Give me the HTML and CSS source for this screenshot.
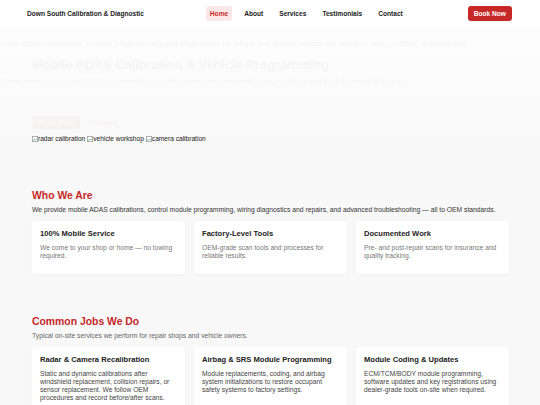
FILE: index.html
```html
<!DOCTYPE html>
<html lang="en">
<head>
  <meta charset="UTF-8">
  <meta name="viewport" content="width=device-width, initial-scale=1.0">
  <title>Down South Calibration &amp; Diagnostic</title>
  <link rel="stylesheet" href="styles.css">
</head>
<body>
  <!-- Barra di navigazione -->
  <header class="nav">
    <div class="brand">Down South Calibration &amp; Diagnostic</div>
    <nav class="links">
      <a class="active" href="#">Home</a>
      <a href="#">About</a>
      <a href="#">Services</a>
      <a href="#">Testimonials</a>
      <a href="#">Contact</a>
    </nav>
    <a class="book" href="#">Book Now</a>
  </header>

  <section class="hero">
    <p class="hero-back">On-site ADAS calibration, module programming and diagnostics for shops and drivers across the South — fast, certified, documented.</p>
    <div class="hero-inner">
      <h1>Mobile ADAS Calibration &amp; Vehicle Programming</h1>
      <p class="hero-sub">Dealer-level scan tools, OEM procedures and certified technicians that come straight to your bay, your driveway or your lot.</p>
      <div class="hero-actions">
        <span class="btn-red">Book Now</span>
        <span class="btn-ghost">Contact</span>
      </div>
    </div>
    <div class="hero-images">
      <span class="img"><svg viewBox="0 0 8 8"><rect x="0.5" y="0.5" width="7" height="7" fill="#fff" stroke="#999"/><path d="M1.5 6.5 L3.5 4 L5 5.5 L6.5 3.5" stroke="#6a9" fill="none"/></svg>radar calibration</span>
      <span class="img"><svg viewBox="0 0 8 8"><rect x="0.5" y="0.5" width="7" height="7" fill="#fff" stroke="#999"/><path d="M1.5 6.5 L3.5 4 L5 5.5 L6.5 3.5" stroke="#6a9" fill="none"/></svg>vehicle workshop</span>
      <span class="img"><svg viewBox="0 0 8 8"><rect x="0.5" y="0.5" width="7" height="7" fill="#fff" stroke="#999"/><path d="M1.5 6.5 L3.5 4 L5 5.5 L6.5 3.5" stroke="#6a9" fill="none"/></svg>camera calibration</span>
    </div>
  </section>

  <!-- Chi siamo -->
  <section class="section">
    <h2>Who We Are</h2>
    <p class="lead dark">We provide mobile ADAS calibrations, control module programming, wiring diagnostics and repairs, and advanced troubleshooting — all to OEM standards.</p>
    <div class="cards">
      <div class="card">
        <h3>100% Mobile Service</h3>
        <p>We come to your shop or home — no towing required.</p>
      </div>
      <div class="card">
        <h3>Factory-Level Tools</h3>
        <p>OEM-grade scan tools and processes for reliable results.</p>
      </div>
      <div class="card">
        <h3>Documented Work</h3>
        <p>Pre- and post-repair scans for insurance and quality tracking.</p>
      </div>
    </div>
  </section>

  <!-- Lavori comuni -->
  <section class="section jobs">
    <h2>Common Jobs We Do</h2>
    <p class="lead">Typical on-site services we perform for repair shops and vehicle owners.</p>
    <div class="cards">
      <div class="card">
        <h3>Radar &amp; Camera Recalibration</h3>
        <p>Static and dynamic calibrations after windshield replacement, collision repairs, or sensor replacement. We follow OEM procedures and record before/after scans.</p>
      </div>
      <div class="card">
        <h3>Airbag &amp; SRS Module Programming</h3>
        <p>Module replacements, coding, and airbag system initializations to restore occupant safety systems to factory settings.</p>
      </div>
      <div class="card">
        <h3>Module Coding &amp; Updates</h3>
        <p>ECM/TCM/BODY module programming, software updates and key registrations using dealer-grade tools on-site when required.</p>
      </div>
    </div>
  </section>
</body>
</html>
```

FILE: styles.css
```css
body {
  margin: 0;
  background-color: #f8f8f8;
  color: #222;
  font-family: "Liberation Sans", Arial, sans-serif;
}

/* Navigazione */
.nav {
  display: flex;
  align-items: center;
  height: 26px;
  padding: 0 28px 0 27px;
  background-color: #fff;
  box-shadow: 0 1px 3px rgba(0, 0, 0, 0.05);
}

.brand {
  font-size: 6.6px;
  font-weight: bold;
  color: #222;
}

.links {
  display: flex;
  align-items: center;
  gap: 8px;
  margin-left: auto;
}

.links a {
  font-size: 6.6px;
  font-weight: bold;
  color: #222;
  text-decoration: none;
  padding: 4px 4px;
  border-radius: 3px;
}

.links a.active {
  background-color: #fde8e8;
  color: #c62828;
}

.book {
  margin-left: 61px;
  font-size: 6.6px;
  font-weight: bold;
  color: #fff;
  background-color: #c62828;
  text-decoration: none;
  padding: 4px 6px;
  border-radius: 3px;
}

/* Hero */
.hero {
  position: relative;
  overflow: hidden;
  padding: 31px 32px 24px;
  background: linear-gradient(#fdfdfd, #f8f8f8);
}

.hero-back {
  position: absolute;
  top: 13px;
  left: -6px;
  margin: 0;
  white-space: nowrap;
  font-size: 8px;
  color: #f5f5f5;
}

.hero-inner {
  position: relative;
  opacity: 0.028;
}

.hero h1 {
  margin: 0;
  font-size: 12.8px;
  color: #222;
}

.hero-sub {
  margin: 4px 0 0 -32px;
  white-space: nowrap;
  font-size: 7.5px;
  color: #555;
}

.hero-actions {
  display: flex;
  align-items: center;
  gap: 10px;
  margin-top: 31px;
}

.btn-red {
  background-color: #c62828;
  color: #fff;
  font-size: 7px;
  font-weight: bold;
  padding: 3px 7px;
  border-radius: 3px;
}

.btn-ghost {
  font-size: 7px;
  font-weight: bold;
  color: #c62828;
}

.hero-images {
  position: relative;
  display: flex;
  gap: 2px;
  margin-top: 6px;
  font-size: 6.6px;
  color: #222;
}

.img {
  display: flex;
  align-items: center;
}

.img svg {
  width: 6px;
  height: 6px;
}

/* Sezioni */
.section {
  padding: 24px 32px 20px;
}

.jobs {
  padding-top: 22px;
}

.section h2 {
  margin: 0;
  font-size: 10.4px;
  color: #c62828;
}

.lead {
  margin: 5px 0 0;
  font-size: 6.75px;
  color: #666;
}

.lead.dark {
  color: #333;
}

.cards {
  display: grid;
  grid-template-columns: repeat(3, 153px);
  gap: 9px;
  margin-top: 8px;
}

.card {
  background-color: #fff;
  border-radius: 4px;
  padding: 8px 8px 9px;
  min-height: 36px;
  box-shadow: 0 1px 3px rgba(0, 0, 0, 0.04);
}

.card h3 {
  margin: 0;
  font-size: 7.6px;
  color: #222;
}

.card p {
  margin: 6px 0 0;
  font-size: 6.7px;
  line-height: 1.2;
  color: #777;
}

.jobs .card p {
  color: #444;
}
```
